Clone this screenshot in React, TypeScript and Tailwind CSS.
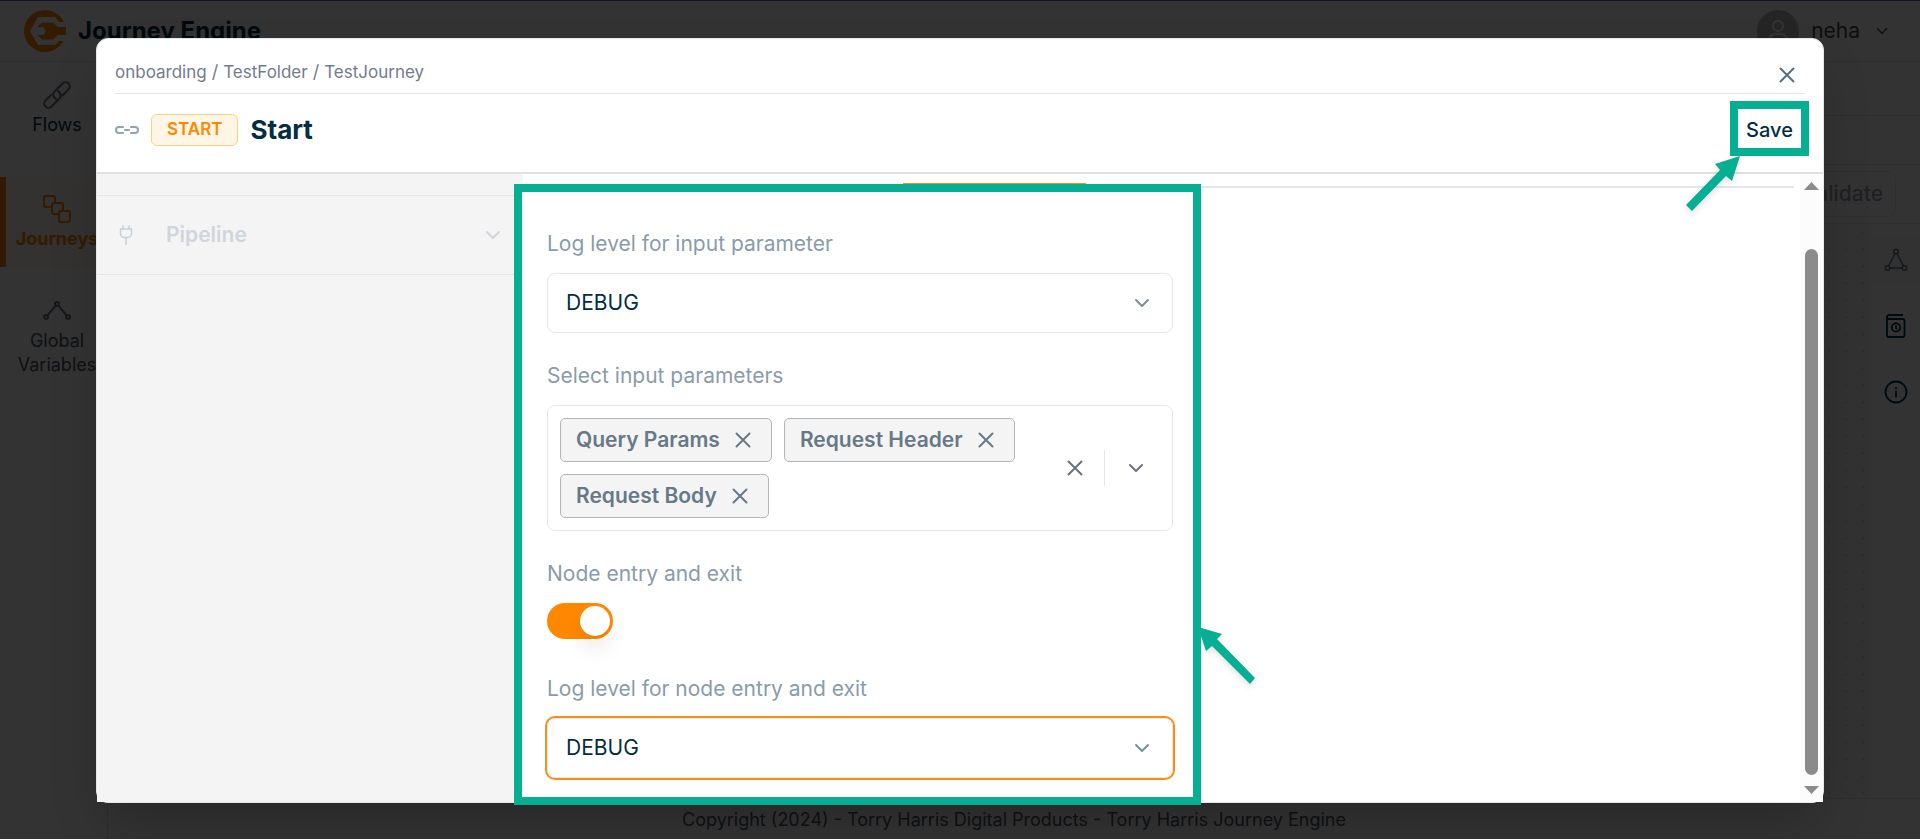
import React, { useState } from "react";

function Chevron({ className = "" }: { className?: string }) {
  return (
    <svg className={className} width="16" height="10" viewBox="0 0 16 10" fill="none" stroke="currentColor" strokeWidth="2" strokeLinecap="round" strokeLinejoin="round" aria-hidden="true">
      <path d="M2 2l6 6 6-6" />
    </svg>
  );
}

function Cross({ className = "" }: { className?: string }) {
  return (
    <svg className={className} width="16" height="16" viewBox="0 0 16 16" fill="none" stroke="currentColor" strokeWidth="2" strokeLinecap="round" aria-hidden="true">
      <path d="M1.500 1.500l13 13M14.500 1.500l-13 13" />
    </svg>
  );
}

function Logo() {
  return (
    <svg width="42" height="42" viewBox="0 0 42 42" aria-hidden="true">
      <circle cx="21" cy="21" r="21" fill="#ff8800" />
      <path d="M42 12H35L31 7H14L6 21L14 35H31L35 31H42Z" fill="#ffffff" />
      <path d="M42 17H34L29 12.500H18L14 16L13.500 17H19.500L22 21L19.500 25H13.500L18 29.500H29L34 25H42Z" fill="#ff8800" />
    </svg>
  );
}

function LinkIcon() {
  return (
    <svg width="30" height="30" viewBox="0 0 30 30" fill="none" stroke="currentColor" strokeWidth="2" strokeLinecap="round" strokeLinejoin="round" aria-hidden="true">
      <path d="M14 19l-1.500-1.500a4.200 4.200 0 0 1 0-6l8-8a4.200 4.200 0 0 1 6 6l-6 6" />
      <path d="M16 11l1.500 1.500a4.200 4.200 0 0 1 0 6l-8 8a4.200 4.200 0 0 1-6-6l6-6" />
    </svg>
  );
}

function JourneysIcon() {
  return (
    <svg width="28" height="28" viewBox="0 0 28 28" fill="none" stroke="currentColor" strokeWidth="2" aria-hidden="true">
      <path d="M8 12H3a2 2 0 0 1-2-2V3a2 2 0 0 1 2-2h7a2 2 0 0 1 2 2v5" />
      <path d="M16 19h-5a2 2 0 0 1-2-2v-7a2 2 0 0 1 2-2h7a2 2 0 0 1 2 2v6" />
      <rect x="16" y="16" width="11" height="11" rx="2" />
    </svg>
  );
}

function VariablesIcon() {
  return (
    <svg width="28" height="20" viewBox="0 0 28 20" fill="none" stroke="currentColor" strokeWidth="2" aria-hidden="true">
      <circle cx="14" cy="3" r="2" />
      <circle cx="3" cy="16" r="2" />
      <circle cx="25" cy="16" r="2" />
      <path d="M12.700 4.700L4.300 14.500M15.300 4.700l8.400 9.800" />
    </svg>
  );
}

function Sidebar() {
  return (
    <nav className="w-[108px] shrink-0 border-r border-gray-200 pt-4">
      <a href="#flows" className="flex w-[114px] flex-col items-center text-center text-lg leading-6 text-[#022d42]">
        <span className="flex h-[34px] items-center text-gray-500"><LinkIcon /></span>
        <span className="pt-px">Flows</span>
      </a>
      <a href="#journeys" className="mt-10 flex h-[90px] w-[114px] flex-col items-center border-l-[6px] border-[#f57c1f] bg-[#fff7ed] pr-[6px] pt-[18px] text-center text-lg font-bold leading-6 text-[#ff8800]">
        <JourneysIcon />
        <span className="pt-1">Journeys</span>
      </a>
      <a href="#variables" className="mt-[34px] flex w-[114px] flex-col items-center text-center text-lg leading-6 text-gray-600">
        <span className="text-gray-500"><VariablesIcon /></span>
        <span className="pt-2">Global Variables</span>
      </a>
    </nav>
  );
}

function PageBackdrop() {
  return (
    <div className="flex h-full flex-col bg-white">
      <header className="flex h-[62px] shrink-0 items-center justify-between border-t border-[#6b4fbb] border-b border-b-gray-200 pl-6 pr-8">
        <div className="flex items-center gap-3">
          <Logo />
          <span className="text-2xl font-bold text-[#022d42]">Journey Engine</span>
        </div>
        <button className="flex items-center gap-3 text-[21px] text-[#3d4d5c]">
          <span className="flex size-[42px] items-center justify-center rounded-full bg-[#b8b8b8] text-white">
            <svg width="22" height="24" viewBox="0 0 22 24" fill="none" stroke="currentColor" strokeWidth="2" aria-hidden="true">
              <circle cx="11" cy="7" r="5" />
              <path d="M2 23v-2a6 6 0 0 1 6-6h6a6 6 0 0 1 6 6v2" />
            </svg>
          </span>
          neha
          <Chevron className="ml-1 w-3" />
        </button>
      </header>
      <div className="flex min-h-0 flex-1">
        <Sidebar />
        <div className="flex min-w-0 flex-1 flex-col">
          <div className="h-[54px] shrink-0 border-b border-gray-200" />
          <div className="h-[49px] shrink-0 border-b border-gray-200" />
          <div className="flex h-[59px] shrink-0 items-center justify-end border-b border-gray-200 pr-6">
            <button className="h-[46px] rounded-lg border border-gray-200 px-3 text-[21px] font-medium text-gray-400">Validate</button>
          </div>
          <div className="flex min-h-0 flex-1">
            <div className="flex-1 bg-gray-50 bg-[radial-gradient(#d1d5db_1px,transparent_1px)] bg-[size:17px_17px] bg-right-top" />
            <div className="flex w-12 flex-col items-center bg-white pt-3 text-[#022d42]">
              <button aria-label="Nodes" className="flex h-[48px] w-full items-center justify-center bg-gray-50 text-gray-500">
                <svg width="24" height="24" viewBox="0 0 24 24" fill="none" stroke="currentColor" strokeWidth="1.500" aria-hidden="true">
                  <circle cx="12" cy="3.500" r="2.300" />
                  <circle cx="3.500" cy="20" r="2.300" />
                  <circle cx="20.500" cy="20" r="2.300" />
                  <path d="M11 5.600L4.500 18M13 5.600L19.500 18M5.800 20h12.400" />
                </svg>
              </button>
              <button aria-label="History" className="flex h-[84px] items-center">
                <svg width="20" height="24" viewBox="0 0 20 24" fill="none" stroke="currentColor" strokeWidth="1.800" strokeLinejoin="round" aria-hidden="true">
                  <path d="M17 1H3a2 2 0 0 0-2 2v0a2 2 0 0 0 2 2h14a1.500 1.500 0 0 1 1.500 1.500v15A1.500 1.500 0 0 1 17 23H2.500A1.500 1.500 0 0 1 1 21.500V3" />
                  <circle cx="10" cy="13.500" r="4.200" />
                  <path d="M10 11.500v2.500l1.200 1" />
                </svg>
              </button>
              <button aria-label="Information" className="flex h-[48px] items-center">
                <svg width="24" height="24" viewBox="0 0 24 24" fill="none" stroke="currentColor" strokeWidth="1.800" aria-hidden="true">
                  <circle cx="12" cy="12" r="10.500" />
                  <path d="M12 10.500v7M12 7v2" />
                </svg>
              </button>
            </div>
          </div>
          <footer className="flex h-[41px] shrink-0 items-center justify-center border-t border-gray-200 pt-0.5 text-lg text-gray-600">
            Copyright (2024) - Torry Harris Digital Products - Torry Harris Journey Engine
          </footer>
        </div>
      </div>
    </div>
  );
}

function LogLevelSelect({ id, label, active = false }: { id: string; label: string; active?: boolean }) {
  return (
    <div className="flex flex-col gap-[15px]">
      <label htmlFor={id} className="text-[21px] leading-7 text-[#8a9bab]">{label}</label>
      <div className="relative">
        <select
          id={id}
          defaultValue="DEBUG"
          className={
            active
              ? "h-[60px] w-full appearance-none rounded-lg border border-gray-200 bg-white px-[18px] text-[21px] text-[#022d42] outline-2 outline-[#f98e16]"
              : "h-[60px] w-full appearance-none rounded-lg border border-gray-200 bg-white px-[18px] text-[21px] text-[#022d42] outline-none"
          }
        >
          <option>DEBUG</option>
          <option>INFO</option>
          <option>ERROR</option>
        </select>
        <Chevron className="pointer-events-none absolute right-[23px] top-[25px] text-[#78909c]" />
      </div>
    </div>
  );
}

function ParameterPicker() {
  const [items, setItems] = useState(["Query Params", "Request Header", "Request Body"]);
  return (
    <div className="flex flex-col gap-[15px]">
      <span id="params-label" className="text-[21px] leading-7 text-[#8a9bab]">Select input parameters</span>
      <div role="group" aria-labelledby="params-label" className="flex items-center rounded-lg border border-gray-200 bg-white py-3 pl-3">
        <div className="flex flex-1 flex-wrap gap-3">
          {items.map((name) => (
            <span key={name} className="flex h-11 items-center gap-[15px] rounded-[5px] border border-[#b3b5b8] bg-[#f4f4f4] pl-[15px] pr-5 text-[21px] font-semibold text-[#677888]">
              {name}
              <button aria-label={"Remove " + name} onClick={() => setItems(items.filter((n) => n !== name))}>
                <Cross />
              </button>
            </span>
          ))}
        </div>
        <button aria-label="Clear all" className="px-[21px] text-[#6b7280]" onClick={() => setItems([])}>
          <Cross />
        </button>
        <span className="h-9 w-px bg-gray-200" />
        <button aria-label="Open list" className="pl-[23px] pr-7 text-[#6b7280]">
          <Chevron />
        </button>
      </div>
    </div>
  );
}

function EntryExitToggle() {
  return (
    <div className="flex flex-col gap-[15px] pb-[7px]">
      <label htmlFor="entry-exit" className="text-[21px] leading-7 text-[#8a9bab]">Node entry and exit</label>
      <div className="relative h-9 w-[66px]">
        <input id="entry-exit" type="checkbox" role="switch" defaultChecked className="peer block size-full appearance-none rounded-full bg-gray-300 checked:bg-[#ff8800]" />
        <span className="pointer-events-none absolute left-[3px] top-[3px] size-[30px] rounded-full bg-white shadow-[0_14px_20px_rgba(0,0,0,0.08)] peer-checked:left-[33px]" />
      </div>
    </div>
  );
}

function Scrollbar() {
  return (
    <div aria-hidden="true" className="flex w-[23px] shrink-0 flex-col items-center bg-[#fcfcfc] pb-2 pt-2">
      <svg width="15" height="8" viewBox="0 0 15 8" fill="#8b8b8b"><path d="M0 8L7.500 0L15 8Z" /></svg>
      <div className="mb-[11px] mt-[59px] w-[13px] flex-1 rounded-full bg-[#8b8b8b]" />
      <svg width="15" height="8" viewBox="0 0 15 8" fill="#8b8b8b"><path d="M0 0L7.500 8L15 0Z" /></svg>
    </div>
  );
}

function JourneyDialog() {
  return (
    <section role="dialog" aria-label="Start" className="flex h-full flex-col rounded-xl border border-gray-200 bg-white shadow-2xl">
      <div className="px-[18px]">
        <div className="flex h-[55px] items-center justify-between border-b border-gray-200 pt-[18px] pr-[10px]">
          <nav aria-label="Breadcrumb" className="-mt-1.5 flex gap-[5px] text-[17px] leading-6 text-[#747b8b]">
            <a href="#onboarding">onboarding</a>
            <span className="text-lg leading-6">/</span>
            <a href="#folder">TestFolder</a>
            <span className="text-lg leading-6">/</span>
            <a href="#journey">TestJourney</a>
          </nav>
          <button aria-label="Close" className="text-[#547080]"><Cross /></button>
        </div>
        <div className="flex h-[78px] items-center justify-between pb-[6px]">
          <div className="flex items-center">
            <svg width="24" height="10" viewBox="0 0 24 10" fill="none" stroke="#90a4b4" strokeWidth="2" strokeLinecap="round" aria-hidden="true">
              <path d="M8 2H4a3 3 0 0 0 0 6h4M16 2h4a3 3 0 0 1 0 6h-4M10 5h4" />
            </svg>
            <span className="ml-3 flex h-8 items-center rounded-md border border-[#ffcf80] bg-[#fff6e6] px-[15px] text-[17px] font-semibold text-[#ff8800]">START</span>
            <h1 className="ml-3 text-[26px] font-bold leading-8 text-[#022d42]">Start</h1>
          </div>
          <div className="-mr-1 mb-1 flex h-[55px] w-[79px] items-center justify-center border-8 border-[#07af92] pt-1">
            <button className="text-xl font-medium text-[#022d42]">Save</button>
          </div>
        </div>
      </div>
      <div className="flex min-h-0 flex-1 border-t-2 border-[#e0e1e3]">
        <aside className="w-[426px] shrink-0 bg-[#f4f4f4] pt-[21px]">
          <button className="flex h-20 w-full items-center border-y border-[#e4e5e8] pl-[22px] pr-[22px] text-[#d0d4dc]">
            <svg width="14" height="20" viewBox="0 0 14 20" fill="none" stroke="#c5ced6" strokeWidth="1.500" strokeLinecap="round" aria-hidden="true">
              <path d="M4 1v3M10 1v3M1.500 4h11v4.500a4 4 0 0 1-4 4h-3a4 4 0 0 1-4-4zM7 13v6.500" />
            </svg>
            <span className="ml-[33px] flex-1 text-left text-[21px] font-semibold">Pipeline</span>
            <Chevron />
          </button>
        </aside>
        <div className="flex min-w-0 flex-1 flex-col">
          <div className="mr-[6px] h-[14px] shrink-0 border-b-2 border-[#e5e5ea]">
            <div className="ml-[380px] mt-[9px] h-[5px] w-[183px] bg-[#e8921c]" />
          </div>
          <div className="relative z-10 -ml-[9px] -mb-[3px] -mt-1 flex w-[687px] flex-1 flex-col gap-[29px] border-8 border-[#07af92] bg-white pl-[25px] pr-5 pt-[38px]">
            <LogLevelSelect id="input-level" label="Log level for input parameter" />
            <ParameterPicker />
            <EntryExitToggle />
            <LogLevelSelect id="node-level" label="Log level for node entry and exit" active />
          </div>
        </div>
        <Scrollbar />
      </div>
    </section>
  );
}

function Pointer({ className, flip = false }: { className: string; flip?: boolean }) {
  return (
    <svg className={className} width="60" height="64" viewBox="0 0 60 64" fill="#07af92" aria-hidden="true">
      <path d={flip ? "M1 4L25 11L20 16L58 55L53 61L15 23L9 28Z" : "M57 3L49 28L43 23L9 58L3 52L37 17L32 11Z"} />
    </svg>
  );
}

export default function App() {
  return (
    <div className="relative h-screen overflow-hidden font-['Inter',sans-serif]">
      <PageBackdrop />
      <div className="absolute inset-0 bg-black/80 px-[5%] pb-9 pt-[38px]">
        <JourneyDialog />
      </div>
      <Pointer className="absolute right-[177px] top-[153px] drop-shadow-md" />
      <Pointer flip className="absolute left-[1197px] top-[623px] drop-shadow-md" />
    </div>
  );
}
